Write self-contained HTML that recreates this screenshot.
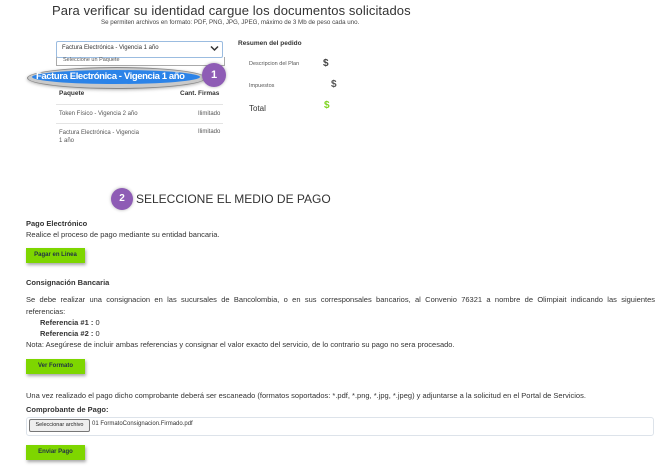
<!DOCTYPE html>
<html><head><meta charset="utf-8"><style>
body{margin:0;width:670px;height:466px;background:#fff;position:relative;overflow:hidden;font-family:"Liberation Sans",sans-serif;color:#333}
.a{position:absolute;white-space:nowrap}
.s{font-size:6px;color:#555}
.b{font-size:7.5px}
.btn{position:absolute;left:26px;width:59px;height:15px;background:#7ed600;box-shadow:1px 2px 3px rgba(0,0,0,.35);font-size:6px;font-weight:bold;color:#234;text-align:center;line-height:15px}
.circ{position:absolute;border-radius:50%;background:#8e5cb5;color:#fff;font-weight:bold;text-align:center;box-shadow:0 0 3px rgba(0,0,0,.3)}
.line{position:absolute;left:56px;width:167px;height:1px;background:#e4e4e4}
</style></head><body>
<div class="a" style="left:52px;top:3px;font-size:13px;letter-spacing:0.1px;color:#333">Para verificar su identidad cargue los documentos solicitados</div>
<div class="a s" style="left:101px;top:19px;font-size:6.2px;color:#444">Se permiten archivos en formato: PDF, PNG, JPG, JPEG, máximo de 3 Mb de peso cada uno.</div>

<div style="position:absolute;left:56px;top:41px;width:165px;height:15px;border:1px solid #9bbce0;border-radius:2px"></div>
<div class="a s" style="left:62px;top:45px;color:#333">Factura Electrónica - Vigencia 1 año</div>
<svg class="a" style="left:210px;top:45px" width="9" height="7"><path d="M1 1.5 L4.5 5 L8 1.5" stroke="#333" stroke-width="1.5" fill="none"/></svg>
<div style="position:absolute;left:56px;top:57px;width:167px;height:8px;border:1px solid #aaa;border-top:none"></div>
<div class="a s" style="left:63px;top:57px;font-size:5.5px">Seleccione un Paquete</div>
<div style="position:absolute;left:27px;top:67px;width:177px;height:20px;border-radius:50%;background:#c9c9c9;border:1px solid #888;box-shadow:0 1px 3px rgba(0,0,0,.3)"></div>
<div style="position:absolute;left:32px;top:70px;width:168px;height:14px;border-radius:50%;background:#2b83e8"></div>
<div class="a" style="left:36px;top:71px;font-size:9.5px;font-weight:bold;color:#fff;letter-spacing:-0.4px">Factura Electrónica - Vigencia 1 año</div>
<div class="circ" style="left:202px;top:63px;width:24px;height:24px;line-height:24px;font-size:11px">1</div>

<div class="a" style="left:59px;top:90px;font-size:6.5px;font-weight:bold;color:#333">Paquete</div>
<div class="a" style="left:180px;top:90px;font-size:6.5px;font-weight:bold;color:#333">Cant. Firmas</div>
<div class="line" style="top:104px"></div>
<div class="a s" style="left:59px;top:111px">Token Físico - Vigencia 2 año</div>
<div class="a s" style="left:198px;top:111px">Ilimitado</div>
<div class="line" style="top:123px"></div>
<div class="a s" style="left:59px;top:129px;line-height:8px">Factura Electrónica - Vigencia<br>1 año</div>
<div class="a s" style="left:198px;top:129px">Ilimitado</div>

<div class="a" style="left:238px;top:40px;font-size:6.5px;font-weight:bold">Resumen del pedido</div>
<div class="a s" style="left:249px;top:61px;font-size:5.5px">Descripcion del Plan</div>
<div class="a" style="left:323px;top:58px;font-size:10px;font-weight:bold;color:#444">$</div>
<div class="a s" style="left:249px;top:83px;font-size:5.5px">Impuestos</div>
<div class="a" style="left:331px;top:79px;font-size:10px;font-weight:bold;color:#555">$</div>
<div class="a" style="left:249px;top:104px;font-size:8px">Total</div>
<div class="a" style="left:324px;top:100px;font-size:10px;font-weight:bold;color:#7ed321">$</div>

<div class="circ" style="left:111px;top:188px;width:22px;height:22px;line-height:22px;font-size:10px">2</div>
<div class="a" style="left:136px;top:192px;font-size:12px;color:#333">SELECCIONE EL MEDIO DE PAGO</div>

<div class="a b" style="left:26px;top:219px;font-weight:bold">Pago Electrónico</div>
<div class="a b" style="left:26px;top:230px">Realice el proceso de pago mediante su entidad bancaria.</div>
<div class="btn" style="top:248px">Pagar en Linea</div>

<div class="a b" style="left:26px;top:278px;font-weight:bold">Consignación Bancaria</div>
<div class="a b" style="left:26px;top:295px;width:629px;text-align:justify;text-align-last:justify;word-spacing:1px">Se debe realizar una consignacion en las sucursales de Bancolombia, o en sus corresponsales bancarios, al Convenio 76321 a nombre de Olimpiait indicando las siguientes</div>
<div class="a b" style="left:26px;top:307px">referencias:</div>
<div class="a b" style="left:40px;top:318px"><b>Referencia #1 :</b> 0</div>
<div class="a b" style="left:40px;top:329px"><b>Referencia #2 :</b> 0</div>
<div class="a b" style="left:26px;top:340px">Nota: Asegúrese de incluir ambas referencias y consignar el valor exacto del servicio, de lo contrario su pago no sera procesado.</div>
<div class="btn" style="top:359px">Ver Formato</div>

<div class="a b" style="left:26px;top:391px">Una vez realizado el pago dicho comprobante deberá ser escaneado (formatos soportados: *.pdf, *.png, *.jpg, *.jpeg) y adjuntarse a la solicitud en el Portal de Servicios.</div>
<div class="a b" style="left:26px;top:405px;font-weight:bold">Comprobante de Pago:</div>
<div style="position:absolute;left:26px;top:417px;width:626px;height:17px;border:1px solid #dde3ea;border-radius:3px"></div>
<div class="a" style="left:29px;top:419px;width:59px;height:11px;border:1px solid #777;background:#eee;border-radius:2px;font-size:5.5px;line-height:11px;text-align:center;color:#222">Seleccionar archivo</div>
<div class="a s" style="left:92px;top:421px;color:#333">01 FormatoConsignacion.Firmado.pdf</div>
<div class="btn" style="top:445px">Enviar Pago</div>
</body></html>
